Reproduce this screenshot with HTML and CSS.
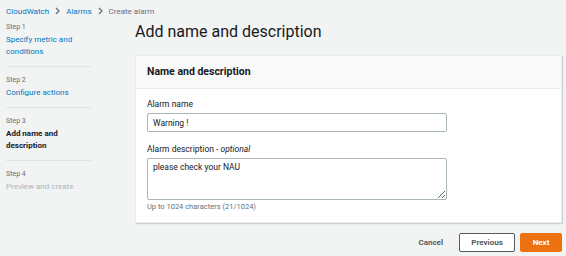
FILE: index.html
```html
<!DOCTYPE html>
<html lang="en">
<head>
  <meta charset="UTF-8">
  <title>Create alarm - CloudWatch</title>
  <link rel="stylesheet" href="styles.css">
</head>
<body>
  <!-- Breadcrumbs -->
  <nav class="breadcrumbs">
    <a href="#">CloudWatch</a>
    <svg class="sep" width="5" height="8" viewBox="0 0 5 8"><path d="M1 1l3 3-3 3" fill="none" stroke="#687078" stroke-width="1.3"/></svg>
    <a href="#">Alarms</a>
    <svg class="sep" width="5" height="8" viewBox="0 0 5 8"><path d="M1 1l3 3-3 3" fill="none" stroke="#687078" stroke-width="1.3"/></svg>
    <span class="current">Create alarm</span>
  </nav>

  <div class="layout">
    <!-- Wizard steps -->
    <ul class="steps">
      <li>
        <span class="step-num">Step 1</span>
        <a href="#">Specify metric and conditions</a>
      </li>
      <li>
        <span class="step-num">Step 2</span>
        <a href="#">Configure actions</a>
      </li>
      <li class="active">
        <span class="step-num">Step 3</span>
        <span class="step-title">Add name and description</span>
      </li>
      <li class="disabled">
        <span class="step-num">Step 4</span>
        <span class="step-title">Preview and create</span>
      </li>
    </ul>

    <!-- Main form -->
    <main class="content">
      <h1>Add name and description</h1>
      <div class="card">
        <div class="card-header">
          <h2>Name and description</h2>
        </div>
        <div class="card-body">
          <label class="field">
            <span class="field-label">Alarm name</span>
            <input type="text" value="Warning !">
          </label>
          <label class="field">
            <span class="field-label">Alarm description - <i>optional</i></span>
            <textarea>please check your NAU</textarea>
            <span class="hint">Up to 1024 characters (21/1024)</span>
          </label>
        </div>
      </div>
      <div class="actions">
        <button class="btn-link">Cancel</button>
        <button class="btn">Previous</button>
        <button class="btn btn-primary">Next</button>
      </div>
    </main>
  </div>
</body>
</html>
```

FILE: styles.css
```css
* {
  margin: 0;
  padding: 0;
  box-sizing: border-box;
}

body {
  font-family: Roboto, "Liberation Sans", Arial, sans-serif;
  background-color: #f2f3f3;
  color: #16191f;
  font-size: 8px;
  overflow: hidden;
}

a {
  color: #0073bb;
  text-decoration: none;
}

/* Breadcrumbs */
.breadcrumbs {
  display: flex;
  align-items: center;
  gap: 6px;
  padding: 4px 6px 0;
  height: 18px;
  font-size: 8px;
}

.breadcrumbs .current {
  color: #687078;
}

/* Layout */
.layout {
  display: grid;
  grid-template-columns: 85px 1fr;
  column-gap: 44px;
  padding: 0 4px 0 6px;
}

/* Steps */
.steps {
  list-style: none;
}

.steps li {
  display: flex;
  flex-direction: column;
  padding: 7px 0 8px;
  border-bottom: 1px solid #e1e4e4;
  line-height: 12px;
  font-size: 8px;
}

.steps li:first-child {
  padding-top: 3px;
}

.steps li:last-child {
  border-bottom: none;
}

.steps .step-num {
  font-size: 7px;
  color: #687078;
  margin-bottom: 1px;
}

.steps .active .step-title {
  font-weight: bold;
}

.steps .disabled .step-title {
  color: #aab7b8;
}

/* Main */
.content h1 {
  font-size: 16px;
  font-weight: normal;
  line-height: 22px;
  margin: 3px 0 12px;
}

.card {
  background: #fff;
  border: 1px solid #eaeded;
  box-shadow: 1px 1px 1px rgba(0, 22, 43, 0.15);
}

.card-header {
  background: #fafafa;
  border-bottom: 1px solid #eaeded;
  padding: 8px 11px;
}

.card-header h2 {
  font-size: 10.5px;
  font-weight: bold;
  line-height: 16px;
}

.card-body {
  padding: 9px 11px 10px;
  display: flex;
  flex-direction: column;
  gap: 11px;
}

.field {
  display: flex;
  flex-direction: column;
}

.field-label {
  font-size: 8.5px;
  line-height: 12px;
  margin-bottom: 3px;
}

.field input,
.field textarea {
  width: 300px;
  font-family: inherit;
  font-size: 8.5px;
  color: #16191f;
  border: 1px solid #aab7b8;
  border-radius: 2px;
  padding: 3px 5px;
  background: #fff;
}

.field input {
  height: 19px;
}

.field textarea {
  height: 42px;
  resize: vertical;
}

.hint {
  font-size: 7.5px;
  line-height: 10px;
  color: #687078;
  margin-top: 2px;
}

/* Footer buttons */
.actions {
  display: flex;
  justify-content: flex-end;
  align-items: center;
  gap: 5px;
  margin-top: 10px;
}

.actions button {
  font-family: inherit;
  font-size: 8px;
  font-weight: bold;
  height: 19px;
  border-radius: 2px;
  cursor: pointer;
}

.btn-link {
  background: none;
  border: none;
  color: #545b64;
  padding: 0 6px;
  margin-right: 5px;
}

.btn {
  background: #fff;
  border: 1px solid #545b64;
  color: #545b64;
  width: 56px;
}

.btn-primary {
  background: #ec7211;
  border-color: #ec7211;
  color: #fff;
  width: 42px;
}
```
